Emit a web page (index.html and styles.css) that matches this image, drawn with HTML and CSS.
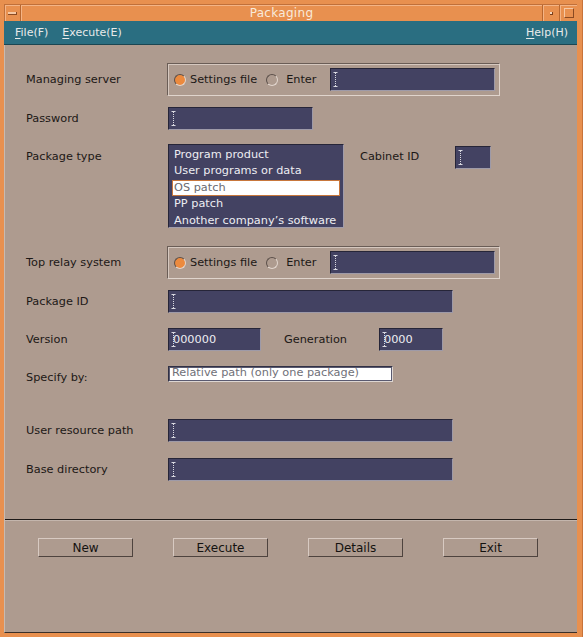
FILE: index.html
```html
<!DOCTYPE html>
<html>
<head>
<meta charset="utf-8">
<title>Packaging</title>
<link rel="stylesheet" href="styles.css">
</head>
<body>
<div class="window">
  <div class="titlebar">
    <div class="tb-btn tb-menu"><span class="minus"></span></div>
    <div class="tb-title">Packaging</div>
    <div class="tb-btn tb-min"><span class="dot"></span></div>
    <div class="tb-btn tb-max"><span class="sq"></span></div>
  </div>
  <div class="menubar">
    <span class="menu"><u>F</u>ile(F)</span>
    <span class="menu"><u>E</u>xecute(E)</span>
    <span class="menu menu-right"><u>H</u>elp(H)</span>
  </div>
  <div class="content">
    <div class="form">
      <div class="row r1">
        <div class="label">Managing server</div>
        <div class="group">
          <span class="radio on"></span><span class="rtext">Settings file</span>
          <span class="radio off"></span><span class="rtext">Enter</span>
          <div class="field f-group"><svg class="ibeam" width="5" height="15" viewBox="0 0 5 15"><path d="M0.5 0.5h4M0.5 14.5h4" stroke="#d8d8e0"/><path d="M2.5 1v13" stroke="#d8d8e0" stroke-dasharray="1 1"/></svg></div>
        </div>
      </div>
      <div class="row r2">
        <div class="label">Password</div>
        <div class="field f-pass"><svg class="ibeam" width="5" height="15" viewBox="0 0 5 15"><path d="M0.5 0.5h4M0.5 14.5h4" stroke="#d8d8e0"/><path d="M2.5 1v13" stroke="#d8d8e0" stroke-dasharray="1 1"/></svg></div>
      </div>
      <div class="row r3">
        <div class="label label-top">Package type</div>
        <div class="list">
          <div class="item">Program product</div>
          <div class="item">User programs or data</div>
          <div class="item sel">OS patch</div>
          <div class="item">PP patch</div>
          <div class="item">Another company’s software</div>
        </div>
        <div class="label cab-label">Cabinet ID</div>
        <div class="field f-cab"><svg class="ibeam" width="5" height="15" viewBox="0 0 5 15"><path d="M0.5 0.5h4M0.5 14.5h4" stroke="#d8d8e0"/><path d="M2.5 1v13" stroke="#d8d8e0" stroke-dasharray="1 1"/></svg></div>
      </div>
      <div class="row r4">
        <div class="label">Top relay system</div>
        <div class="group">
          <span class="radio on"></span><span class="rtext">Settings file</span>
          <span class="radio off"></span><span class="rtext">Enter</span>
          <div class="field f-group"><svg class="ibeam" width="5" height="15" viewBox="0 0 5 15"><path d="M0.5 0.5h4M0.5 14.5h4" stroke="#d8d8e0"/><path d="M2.5 1v13" stroke="#d8d8e0" stroke-dasharray="1 1"/></svg></div>
        </div>
      </div>
      <div class="row r5">
        <div class="label">Package ID</div>
        <div class="field f-wide"><svg class="ibeam" width="5" height="15" viewBox="0 0 5 15"><path d="M0.5 0.5h4M0.5 14.5h4" stroke="#d8d8e0"/><path d="M2.5 1v13" stroke="#d8d8e0" stroke-dasharray="1 1"/></svg></div>
      </div>
      <div class="row r6">
        <div class="label">Version</div>
        <div class="field f-ver"><svg class="ibeam over" width="5" height="15" viewBox="0 0 5 15"><path d="M0.5 0.5h4M0.5 14.5h4" stroke="#d8d8e0"/><path d="M2.5 1v13" stroke="#d8d8e0" stroke-dasharray="1 1"/></svg><span class="ftext">000000</span></div>
        <div class="label gen-label">Generation</div>
        <div class="field f-gen"><svg class="ibeam over" width="5" height="15" viewBox="0 0 5 15"><path d="M0.5 0.5h4M0.5 14.5h4" stroke="#d8d8e0"/><path d="M2.5 1v13" stroke="#d8d8e0" stroke-dasharray="1 1"/></svg><span class="ftext">0000</span></div>
      </div>
      <div class="row r7">
        <div class="label label-spec">Specify by:</div>
        <div class="combo">Relative path (only one package)</div>
      </div>
      <div class="row r8">
        <div class="label">User resource path</div>
        <div class="field f-wide"><svg class="ibeam" width="5" height="15" viewBox="0 0 5 15"><path d="M0.5 0.5h4M0.5 14.5h4" stroke="#d8d8e0"/><path d="M2.5 1v13" stroke="#d8d8e0" stroke-dasharray="1 1"/></svg></div>
      </div>
      <div class="row r9">
        <div class="label">Base directory</div>
        <div class="field f-wide"><svg class="ibeam" width="5" height="15" viewBox="0 0 5 15"><path d="M0.5 0.5h4M0.5 14.5h4" stroke="#d8d8e0"/><path d="M2.5 1v13" stroke="#d8d8e0" stroke-dasharray="1 1"/></svg></div>
      </div>
    </div>
    <div class="sep"></div>
    <div class="buttons">
      <div class="btn">New</div>
      <div class="btn">Execute</div>
      <div class="btn">Details</div>
      <div class="btn">Exit</div>
    </div>
  </div>
</div>
</body>
</html>
```

FILE: styles.css
```css
* { box-sizing: border-box; }
html, body { margin: 0; padding: 0; background: #e8904f; }
body { font-family: "DejaVu Sans", sans-serif; font-size: 11.3px; }

.window {
  width: 583px;
  height: 637px;
  background: #e8904f;
  padding: 4px 5px 4px 4px;
  display: flex;
  flex-direction: column;
  border-right: 1px solid #c8733a;
}

.titlebar {
  height: 17px;
  display: flex;
  border-top: 1px solid #c0703a;
  border-left: 1px solid #c0703a;
  flex: none;
}
.tb-btn, .tb-title {
  border-right: 1px solid #b8672f;
  box-shadow: inset 1px 1px 0 #f4b486;
  display: flex;
  align-items: center;
  justify-content: center;
}
.tb-menu { width: 16px; }
.tb-min { width: 17px; }
.tb-max { width: 17px; border-right: none; }
.tb-title {
  flex: 1;
  color: #f8eadb;
  font-size: 12px;
  letter-spacing: 0.3px;
}
.minus {
  width: 9px; height: 3px;
  background: #f6c8a4;
  border-bottom: 1px solid #8a4a22;
  border-right: 1px solid #8a4a22;
}
.dot {
  width: 3px; height: 3px;
  background: #f6d8c0;
  border-bottom: 1px solid #7a3e1a;
  border-right: 1px solid #7a3e1a;
}
.sq {
  width: 10px; height: 10px;
  border: 1px solid #f6c8a4;
  border-right-color: #8a4a22;
  border-bottom-color: #8a4a22;
}

.menubar {
  height: 24px;
  flex: none;
  background: #2a6e81;
  border-bottom: 1px solid #1a4652;
  display: flex;
  align-items: center;
  padding: 0 9px 0 11px;
  color: #e8eaea;
  font-size: 11px;
}
.menu { margin-right: 14px; }
.menu u { text-underline-offset: 2px; }
.menu-right { margin-left: auto; margin-right: 0; }

.content {
  flex: 1;
  background: #ae9b8f;
  border-left: 1px solid #c8bab0;
  border-bottom: 1px solid #3a302a;
  color: #1c1816;
}

.form { padding: 18px 0 0 21px; }
.row { display: flex; align-items: center; }
.r2 { margin-top: 11px; }
.r3 { margin-top: 14px; align-items: flex-start; }
.r4 { margin-top: 18px; }
.r5 { margin-top: 11px; }
.r6 { margin-top: 15px; }
.r7 { margin-top: 15px; align-items: flex-start; }
.r8 { margin-top: 34px; }
.r9 { margin-top: 16px; }

.label { width: 142px; flex: none; white-space: nowrap; }
.label-top { height: 26px; line-height: 26px; }
.label-spec { margin-top: 5px; line-height: 14px; }
.cab-label { width: 95px; margin-left: 16px; height: 26px; line-height: 26px; }
.gen-label { width: 95px; margin-left: 23px; }

.group {
  width: 333px;
  height: 33px;
  margin-left: -1px;
  display: flex;
  align-items: center;
  padding-left: 6px;
  border: 1px solid #e0d4cc;
  border-top-color: #6a5d56;
  border-left-color: #6a5d56;
  box-shadow: inset 1px 1px 0 #d6c8bf;
}
.radio {
  width: 12px; height: 12px;
  border-radius: 50%;
  flex: none;
  border: 1px solid #e2d6ce;
  border-top-color: #5c504a;
  border-left-color: #5c504a;
}
.radio.on { background: #ec8a3e; }
.radio.off { background: transparent; margin-left: 9px; }
.rtext { margin-left: 4px; white-space: nowrap; }
.radio.off + .rtext { margin-left: 8px; }

.field {
  height: 23px;
  background: #434262;
  border: 1px solid #9e9aa8;
  border-top-color: #262538;
  border-left-color: #262538;
  display: flex;
  align-items: center;
  padding-left: 2px;
  color: #eeeef2;
  flex: none;
}
.f-group { width: 165px; margin-left: auto; margin-right: 4px; }
.f-pass { width: 145px; }
.f-cab { width: 36px; margin-top: 2px; }
.f-wide { width: 285px; }
.f-ver { width: 93px; }
.f-gen { width: 64px; }
.ibeam { display: block; flex: none; }
.ibeam.over { margin-right: -3px; }
.ftext { font-size: 11.3px; }

.list {
  width: 176px;
  height: 84px;
  background: #434262;
  border: 1px solid #a09cab;
  border-top-color: #262538;
  border-left-color: #262538;
  padding: 2px 3px 0 3px;
  color: #eeeef2;
  flex: none;
}
.item {
  height: 16.4px;
  line-height: 16px;
  padding-left: 2px;
  white-space: nowrap;
}
.item.sel {
  background: #ffffff;
  border: 1px solid #c8773c;
  color: #6a6a70;
  line-height: 14px;
  padding-left: 1px;
}

.combo {
  width: 225px;
  height: 16px;
  background: #ffffff;
  border: 1px solid #ddd6d2;
  border-top-color: #303044;
  border-left-color: #303044;
  outline: 1px solid #5a5a70;
  outline-offset: -2px;
  color: #707078;
  line-height: 12px;
  padding-left: 3px;
  white-space: nowrap;
}

.sep {
  margin-top: 38px;
  height: 2px;
  border-top: 1px solid #1e1a18;
  border-bottom: 1px solid #c4b6ad;
}

.buttons {
  display: flex;
  gap: 40px;
  padding-left: 33px;
  margin-top: 17px;
}
.btn {
  width: 95px;
  height: 19px;
  border: 1px solid #4e433e;
  border-top-color: #d8cac2;
  border-left-color: #d8cac2;
  display: flex;
  align-items: center;
  justify-content: center;
  color: #141210;
  font-size: 12px;
}
```
